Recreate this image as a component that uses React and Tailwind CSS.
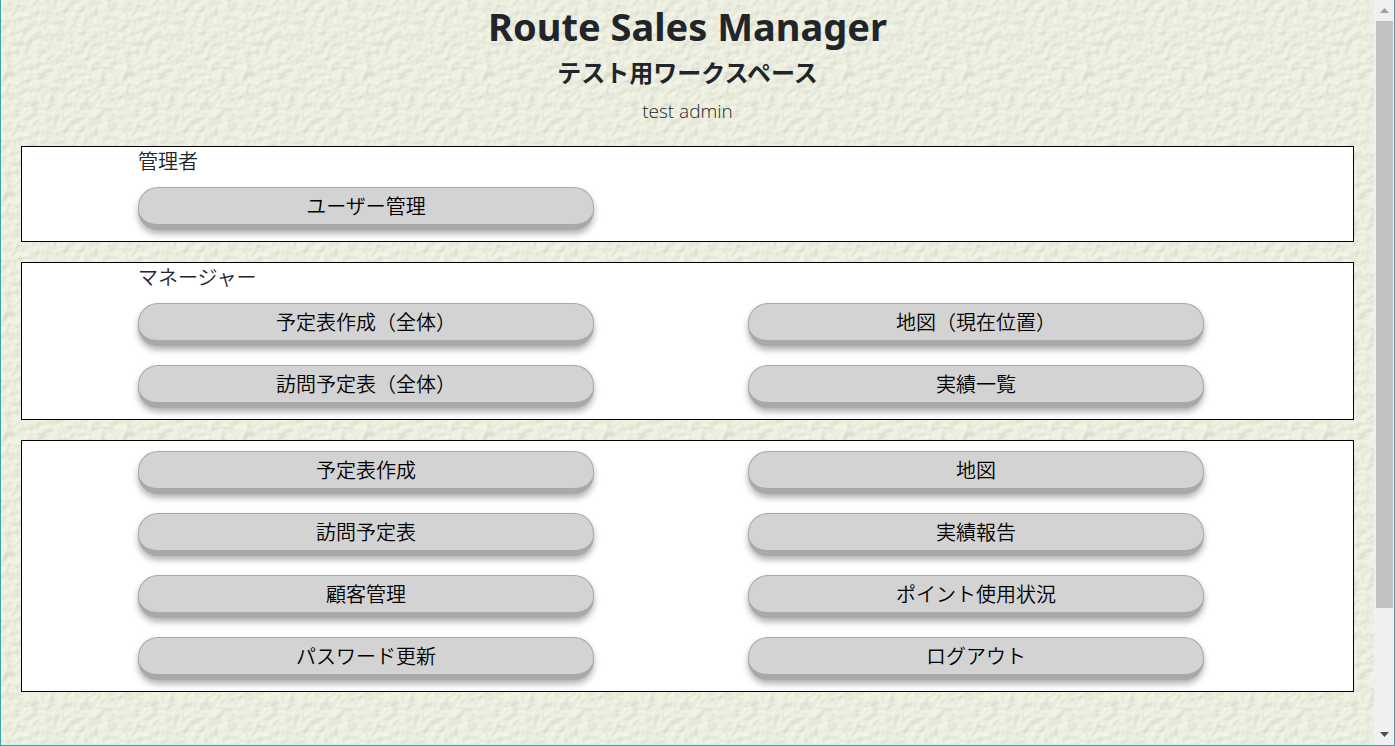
const sections = [
  {
    id: 'admin',
    title: '管理者',
    items: ['ユーザー管理'],
  },
  {
    id: 'manager',
    title: 'マネージャー',
    items: ['予定表作成（全体）', '地図（現在位置）', '訪問予定表（全体）', '実績一覧'],
  },
  {
    id: 'general',
    items: [
      '予定表作成',
      '地図',
      '訪問予定表',
      '実績報告',
      '顧客管理',
      'ポイント使用状況',
      'パスワード更新',
      'ログアウト',
    ],
  },
];

// embossed paper, repeats every 120px
function PaperTexture() {
  return (
    <svg className="absolute inset-0 -z-10 h-full w-full" aria-hidden="true">
      <filter id="paper" x="0" y="0" width="100%" height="100%" colorInterpolationFilters="sRGB">
        <feTurbulence type="fractalNoise" baseFrequency="0.12 0.13" numOctaves="2" seed="8" stitchTiles="stitch" x="0" y="0" width="120" height="120" result="noise" />
        <feTile in="noise" result="tiled" />
        <feDiffuseLighting in="tiled" surfaceScale="1.3" diffuseConstant="1.18" lightingColor="#ebeee0">
          <feDistantLight azimuth="225" elevation="58" />
        </feDiffuseLighting>
      </filter>
      <rect width="100%" height="100%" fill="#eceede" />
      <rect width="100%" height="100%" filter="url(#paper)" opacity="0.3" />
    </svg>
  );
}

function MenuButton({ children }) {
  return (
    <button
      type="button"
      className="h-[43px] w-full cursor-pointer rounded-[20px] border border-b-6 border-[#a9a9a9] bg-[#d3d3d3] pt-0.5 text-xl leading-none font-[350] text-black shadow-[0_4px_6px_rgba(0,0,0,0.3)] hover:bg-[#dcdcdc]"
    >
      {children}
    </button>
  );
}

function MenuSection({ title, items }) {
  return (
    <section className="border border-black bg-white pr-[149px] pb-[11px] pl-[116px]">
      {title ? <h3 className="text-xl leading-[30px] font-[350]">{title}</h3> : null}
      <div className="grid grid-cols-2 gap-x-[154px] gap-y-[19px] pt-2.5">
        {items.map((item) => (
          <MenuButton key={item}>{item}</MenuButton>
        ))}
      </div>
    </section>
  );
}

function ScrollRail() {
  return (
    <div className="flex w-5 shrink-0 flex-col bg-[#f0f0f0] pr-px pl-0.5" aria-hidden="true">
      <div className="flex h-[21px] shrink-0 items-center justify-center">
        <svg width="9" height="5" viewBox="0 0 9 5" fill="#a0a0a0">
          <path d="M4.5 0 9 5H0z" />
        </svg>
      </div>
      <div className="flex-1">
        <div className="h-[83.5%] bg-[#c1c1c1]" />
      </div>
      <div className="flex h-[21px] shrink-0 items-center justify-center">
        <svg width="9" height="5" viewBox="0 0 9 5" fill="#505050">
          <path d="M0 0h9L4.5 5z" />
        </svg>
      </div>
    </div>
  );
}

export default function App() {
  return (
    <div className="flex h-screen overflow-hidden border-x border-b border-[#3aa5a8] font-['Noto_Sans','Noto_Sans_CJK_JP',sans-serif] text-[#212529]">
      <main className="relative isolate flex-1 overflow-hidden border-b border-[#ccf5f0] px-5">
        <PaperTexture />
        <header className="pb-[17px] text-center">
          <h1 className="text-[38px] leading-[52px] font-bold">Route Sales Manager</h1>
          <h2 className="text-2xl leading-[42px] font-bold">テスト用ワークスペース</h2>
          <p className="font-['Open_Sans',sans-serif] text-[19px] leading-[35px] font-[350]">test admin</p>
        </header>
        <div className="flex flex-col gap-5">
          {sections.map((section) => (
            <MenuSection key={section.id} title={section.title} items={section.items} />
          ))}
        </div>
      </main>
      <ScrollRail />
    </div>
  );
}
